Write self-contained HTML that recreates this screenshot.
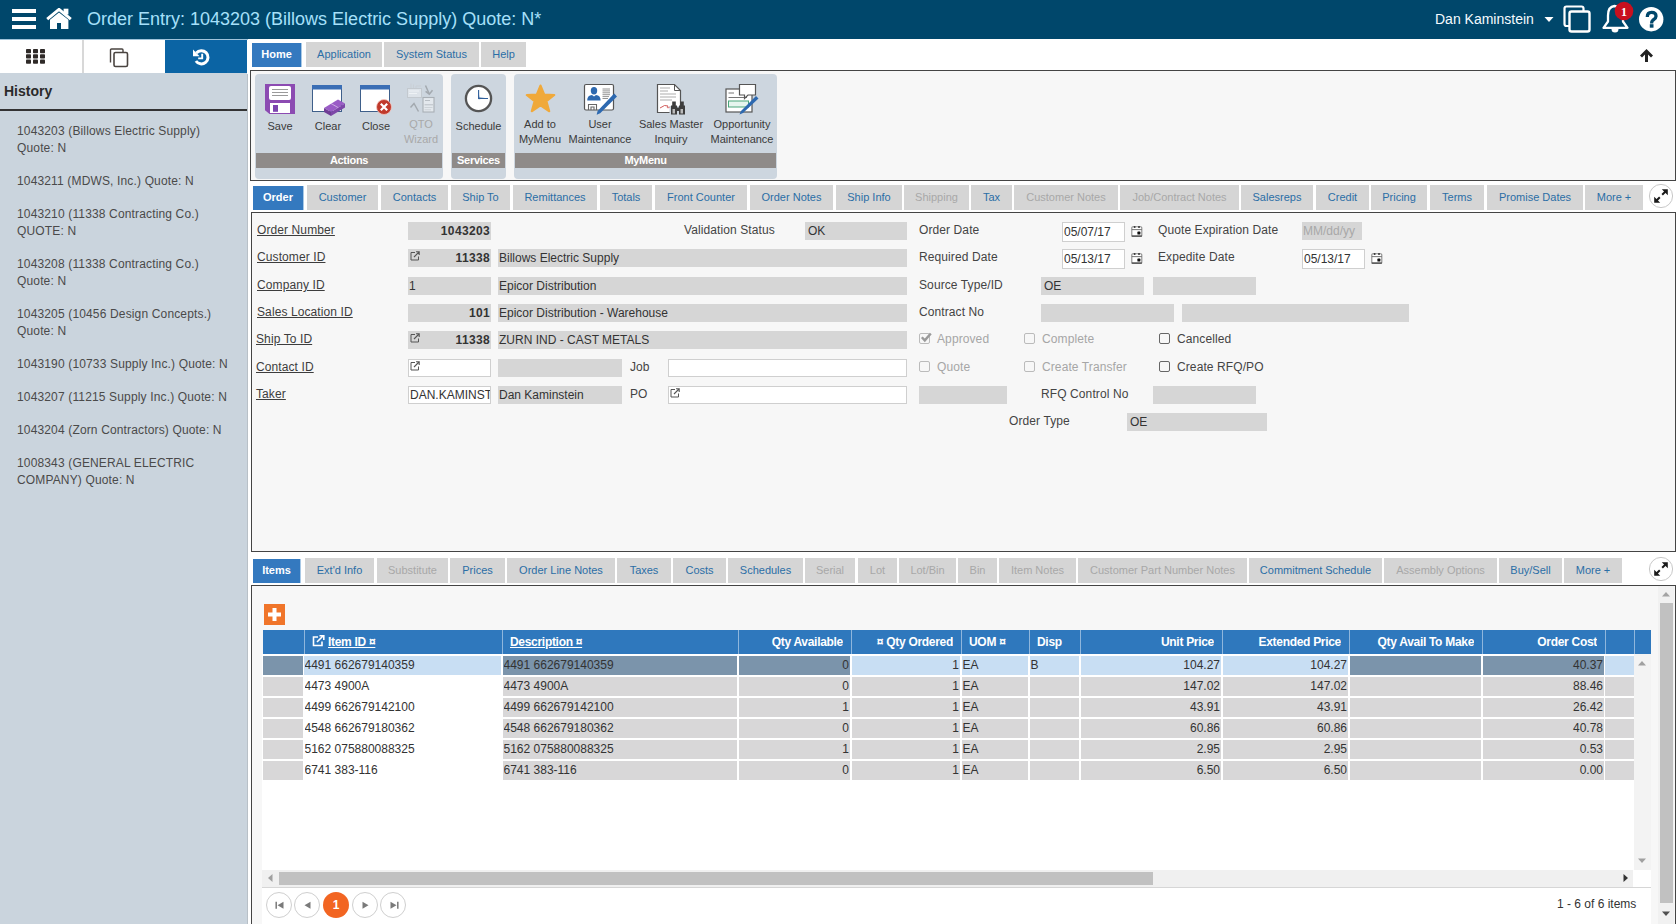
<!DOCTYPE html><html><head><meta charset="utf-8"><style>
*{box-sizing:border-box;margin:0;padding:0}
html,body{width:1676px;height:924px;overflow:hidden;background:#fff;font-family:"Liberation Sans",sans-serif;color:#333;position:relative}
.t{position:absolute;white-space:nowrap}
.tab{position:absolute;height:25px;line-height:25px;background:#d5d5d5;color:#2b6ea6;font-size:11px;text-align:center}
.tab.act{background:#3479bf;color:#fff;font-weight:bold;margin-top:1px;height:24px;line-height:23px;box-shadow:1px 0 0 #a9c9e6}
.tab.dis{color:#a8a8a8}
.lbl{position:absolute;font-size:12px;color:#444;white-space:nowrap;line-height:18px;height:18px;letter-spacing:0.1px}
.lnk{text-decoration:underline}
.fld{position:absolute;height:18px;line-height:18px;background:#d6d6d6;font-size:12px;color:#333;padding:0 1px;white-space:nowrap;overflow:hidden}
.wfld{position:absolute;height:18px;line-height:16px;background:#fff;border:1px solid #cfcfcf;font-size:12px;color:#333;padding:0 1px;white-space:nowrap;overflow:hidden}
.r{text-align:right}
.b{font-weight:bold;letter-spacing:0.35px}
.chk{position:absolute;width:11px;height:11px;border:1px solid #777;border-radius:2px;background:transparent}
.grp{position:absolute;top:74px;height:105px;background:#cdd6df;border-radius:4px}
.gl{position:absolute;left:1px;right:1px;top:79px;height:15px;line-height:15px;background:#8f8b89;color:#fff;font-weight:bold;font-size:11px;letter-spacing:-0.3px;text-align:center}
.tl{position:absolute;font-size:11px;color:#3a3a3a;text-align:center;line-height:15px;white-space:nowrap}
.hist{position:absolute;left:17px;font-size:12px;color:#4a4a4a;line-height:17px;width:230px;letter-spacing:0.15px}
.th{position:absolute;top:630px;height:24px;line-height:24px;color:#fff;font-weight:bold;font-size:12px;letter-spacing:-0.3px;white-space:nowrap;overflow:hidden}
.c{position:absolute;height:19px;line-height:19px;font-size:12px;color:#333;white-space:nowrap;overflow:hidden}
</style></head><body><div style="position:absolute;left:0px;top:0px;width:1676px;height:39px;background:#00476b"></div>
<div style="position:absolute;left:12px;top:9px;width:24px;height:4px;background:#fff"></div>
<div style="position:absolute;left:12px;top:17px;width:24px;height:4px;background:#fff"></div>
<div style="position:absolute;left:12px;top:25px;width:24px;height:4px;background:#fff"></div>
<svg style="position:absolute;left:45px;top:8px" width="28" height="22" viewBox="0 0 28 22">
<path d="M2.2 11.2 L14 1.4 L25.8 11.2" fill="none" stroke="#fff" stroke-width="3"/>
<rect x="18.6" y="0.7" width="4.8" height="5.8" fill="#fff"/>
<path d="M5 21 V11.8 L14 4.4 L23.4 11.8 V21 H16 V15 H12 V21Z" fill="#fff"/>
</svg>
<div style="position:absolute;left:87px;top:7px;white-space:nowrap;font-size:18px;color:#a6e0fa;line-height:24px">Order Entry: 1043203 (Billows Electric Supply) Quote: N*</div>
<div style="position:absolute;left:1435px;top:8px;white-space:nowrap;font-size:14px;color:#f4fbff;line-height:22px">Dan Kaminstein</div>
<svg style="position:absolute;left:1544px;top:16px" width="10" height="7"><path d="M0.5 1 L9.5 1 L5 6Z" fill="#fff"/></svg>
<svg style="position:absolute;left:1562px;top:4px" width="31" height="30" viewBox="0 0 31 30">
<path d="M7.5 22 H4.5 Q2.5 22 2.5 20 V4.5 Q2.5 2.5 4.5 2.5 H19.5 Q21.5 2.5 21.5 4.5 V7" fill="none" stroke="#fff" stroke-width="2.2"/>
<rect x="7.5" y="7.5" width="20" height="20" rx="2" fill="none" stroke="#fff" stroke-width="2.4"/>
</svg>
<svg style="position:absolute;left:1600px;top:3px;overflow:visible" width="32" height="32" viewBox="0 0 32 32">
<path d="M14.5 3 C9.5 3.5 8 8 8 12.5 V18.5 L3.5 24.8 H27.5 L23 18.5 V12.5 C23 8 20 3.5 14.5 3Z" fill="none" stroke="#fff" stroke-width="2.3" stroke-linejoin="round"/>
<path d="M11.5 26 A3.5 3.5 0 0 0 18.5 26Z" fill="#fff"/>
<circle cx="24" cy="8" r="9.3" fill="#c8101f"/>
<text x="24" y="12.5" font-family="Liberation Serif" font-size="12" font-weight="bold" fill="#fff" text-anchor="middle">1</text>
</svg>
<svg style="position:absolute;left:1638px;top:7px" width="26" height="26" viewBox="0 0 26 26">
<circle cx="13.2" cy="12.2" r="12.2" fill="#fff"/>
<path d="M9.3 9.9 C9.3 6.6 11.2 5.3 13.6 5.3 C16.3 5.3 18 6.9 18 9.2 C18 11.6 15.8 12.3 14.6 13.4 C13.8 14.1 13.6 14.9 13.6 16.4" fill="none" stroke="#00476b" stroke-width="3.3"/><rect x="11.8" y="17.2" width="3.7" height="3.5" fill="#00476b"/>
</svg>
<div style="position:absolute;left:0px;top:39px;width:248px;height:1px;background:#9fc3da"></div>
<div style="position:absolute;left:0px;top:40px;width:247px;height:884px;background:#cad4dd"></div>
<div style="position:absolute;left:247px;top:74px;width:1px;height:850px;background:#b8c0c7"></div>
<div style="position:absolute;left:0px;top:40px;width:82px;height:33px;background:#fff"></div>
<div style="position:absolute;left:82px;top:40px;width:2px;height:33px;background:#d8d8d8"></div>
<div style="position:absolute;left:84px;top:40px;width:81px;height:33px;background:#fff"></div>
<div style="position:absolute;left:165px;top:40px;width:82px;height:33px;background:#0b64a4"></div>
<svg style="position:absolute;left:26px;top:49px" width="20" height="15"><rect x="0" y="0.0" width="5" height="4.2" rx="0.8" fill="#2f2a28"/><rect x="7" y="0.0" width="5" height="4.2" rx="0.8" fill="#2f2a28"/><rect x="14" y="0.0" width="5" height="4.2" rx="0.8" fill="#2f2a28"/><rect x="0" y="5.3" width="5" height="4.2" rx="0.8" fill="#2f2a28"/><rect x="7" y="5.3" width="5" height="4.2" rx="0.8" fill="#2f2a28"/><rect x="14" y="5.3" width="5" height="4.2" rx="0.8" fill="#2f2a28"/><rect x="0" y="10.6" width="5" height="4.2" rx="0.8" fill="#2f2a28"/><rect x="7" y="10.6" width="5" height="4.2" rx="0.8" fill="#2f2a28"/><rect x="14" y="10.6" width="5" height="4.2" rx="0.8" fill="#2f2a28"/></svg>
<svg style="position:absolute;left:108px;top:47px" width="22" height="21" viewBox="0 0 22 21">
<path d="M2.5 15.5 V3 Q2.5 2 3.5 2 H14 Q15 2 15 3 V5" fill="none" stroke="#4a4440" stroke-width="1.4"/>
<rect x="6" y="5.5" width="13.5" height="14" rx="1.5" fill="#fff" stroke="#4a4440" stroke-width="1.6"/>
</svg>
<svg style="position:absolute;left:191px;top:49px" width="20" height="18" viewBox="0 0 20 18">
<path d="M5.34 4.06 A6.6 6.6 0 1 1 4.93 11.99" fill="none" stroke="#fff" stroke-width="3"/>
<path d="M2 0.5 L2 7.3 L8.6 7.3Z" fill="#fff"/>
<path d="M11.2 4.8 V9.4 H7.2" fill="none" stroke="#fff" stroke-width="1.9"/>
</svg>
<div style="position:absolute;left:4px;top:80px;white-space:nowrap;font-size:14px;font-weight:bold;color:#2a2a2a;line-height:22px">History</div>
<div style="position:absolute;left:0px;top:109px;width:247px;height:2px;background:#333"></div>
<div class="hist" style="top:122.5px">1043203 (Billows Electric Supply)<br>Quote: N</div>
<div class="hist" style="top:172.5px">1043211 (MDWS, Inc.) Quote: N</div>
<div class="hist" style="top:205.5px">1043210 (11338 Contracting Co.)<br>QUOTE: N</div>
<div class="hist" style="top:255.5px">1043208 (11338 Contracting Co.)<br>Quote: N</div>
<div class="hist" style="top:306px">1043205 (10456 Design Concepts.)<br>Quote: N</div>
<div class="hist" style="top:356px">1043190 (10733 Supply Inc.) Quote: N</div>
<div class="hist" style="top:389px">1043207 (11215 Supply Inc.) Quote: N</div>
<div class="hist" style="top:421.5px">1043204 (Zorn Contractors) Quote: N</div>
<div class="hist" style="top:454.5px">1008343 (GENERAL ELECTRIC<br>COMPANY) Quote: N</div>
<div class="tab act" style="left:252px;top:42px;width:49px">Home</div>
<div class="tab" style="left:306px;top:42px;width:76px">Application</div>
<div class="tab" style="left:384px;top:42px;width:95px">System Status</div>
<div class="tab" style="left:481px;top:42px;width:45px">Help</div>
<svg style="position:absolute;left:1638px;top:47px" width="17" height="17" viewBox="0 0 17 17">
<path d="M8.5 2 L15 8.5 L13 10.5 L10 7.5 V15 H7 V7.5 L4 10.5 L2 8.5Z" fill="#222"/>
</svg>
<div style="position:absolute;left:250px;top:70px;width:1426px;height:111px;background:#f7f7f7;border:1px solid #444"></div>
<div class="grp" style="left:255px;width:188px"><div class="gl">Actions</div></div>
<div class="grp" style="left:451px;width:55px"><div class="gl">Services</div></div>
<div class="grp" style="left:514px;width:263px"><div class="gl">MyMenu</div></div>
<div class="tl" style="left:230px;width:100px;top:119px;color:#3a3a3a">Save</div>
<div class="tl" style="left:278px;width:100px;top:119px;color:#3a3a3a">Clear</div>
<div class="tl" style="left:326px;width:100px;top:119px;color:#3a3a3a">Close</div>
<div class="tl" style="left:371px;width:100px;top:117px;color:#a9a9a9">QTO<br>Wizard</div>
<div class="tl" style="left:428.5px;width:100px;top:119px;color:#3a3a3a">Schedule</div>
<div class="tl" style="left:490px;width:100px;top:117px;color:#3a3a3a">Add to<br>MyMenu</div>
<div class="tl" style="left:550px;width:100px;top:117px;color:#3a3a3a">User<br>Maintenance</div>
<div class="tl" style="left:621px;width:100px;top:117px;color:#3a3a3a">Sales Master<br>Inquiry</div>
<div class="tl" style="left:692px;width:100px;top:117px;color:#3a3a3a">Opportunity<br>Maintenance</div>
<svg style="position:absolute;left:265px;top:84px" width="30" height="30" viewBox="0 0 30 30">
<path d="M0 0 H30 V30 H4.5 L0 26.2Z" fill="#8c4bb2"/>
<rect x="4" y="2" width="22" height="14" rx="2" fill="#fff"/>
<rect x="7" y="5" width="16" height="1" fill="#9a9a9a"/><rect x="7" y="8" width="16" height="1" fill="#9a9a9a"/><rect x="7" y="11" width="16" height="1" fill="#9a9a9a"/>
<rect x="5" y="19" width="20" height="10" fill="#fff"/>
<rect x="8" y="21" width="5" height="6.8" fill="#7d45b0"/>
</svg>
<svg style="position:absolute;left:312px;top:84px" width="34" height="32" viewBox="0 0 34 32">
<rect x="0.5" y="1.5" width="29" height="26" fill="#fff" stroke="#3e5f8a" stroke-width="1"/>
<rect x="0" y="1" width="30" height="4.5" fill="#3a6eb5"/>
<path d="M12 24 L26 15.5 L33 19.5 L19 28Z" fill="#9a5cc6"/>
<path d="M12 24 L19 28 V32 L12 28Z" fill="#6f3d96"/>
<path d="M19 28 L33 19.5 V23.5 L19 32Z" fill="#7d47a8"/>
<path d="M19 19.5 L26 23.5" stroke="#d9c2ea" stroke-width="0.8"/>
</svg>
<svg style="position:absolute;left:360px;top:84px" width="32" height="32" viewBox="0 0 32 32">
<rect x="0.5" y="1.5" width="29" height="26" fill="#fff" stroke="#3e5f8a" stroke-width="1"/>
<rect x="0" y="1" width="30" height="4.5" fill="#3a6eb5"/>
<circle cx="24" cy="23" r="7.5" fill="#c0392b" stroke="#f2c6c0" stroke-width="0.8"/>
<path d="M20.8 19.8 L27.2 26.2 M27.2 19.8 L20.8 26.2" stroke="#fff" stroke-width="2.2"/>
</svg>
<svg style="position:absolute;left:405px;top:83px" width="33" height="32" viewBox="0 0 33 32">
<rect x="2.5" y="5.5" width="14" height="9" fill="#dde3e9" stroke="#c3c9cf" stroke-width="1"/>
<path d="M4 8 H14 M4 10.5 H12" stroke="#eef2f5" stroke-width="1.2"/>
<path d="M6 5 V0.5 M8.5 5 V1.5 M11 5 V3 H16" fill="none" stroke="#c9cfd5" stroke-width="1"/>
<path d="M20.5 2.5 L24.3 11 M20.6 8.4 L24.3 11.2 L27.5 7.2" fill="none" stroke="#a3a9af" stroke-width="1.5"/>
<path d="M5.5 24.5 L9 20.5 L13.5 28.5" fill="none" stroke="#a3a9af" stroke-width="1.5"/>
<rect x="18" y="14.5" width="11" height="14.5" fill="#e3e8ed" stroke="#a9afb5" stroke-width="1.1"/>
<path d="M20 17.5 H25 M19.5 21.8 H28" stroke="#b9bfc5" stroke-width="1"/>
<path d="M19.5 24.5 H27.5 M19.5 26.8 H26" stroke="#c9cfd5" stroke-width="0.9"/>
</svg>
<svg style="position:absolute;left:464px;top:84px" width="30" height="30" viewBox="0 0 30 30">
<circle cx="14.5" cy="14.5" r="12.6" fill="#fff" stroke="#555" stroke-width="2.3"/>
<path d="M14.6 6 L15.3 13.6 L24 14.3 L14.6 15.2Z" fill="#2f5f9a"/><path d="M14.6 6 V14.5 H24" fill="none" stroke="#2f5f9a" stroke-width="1.1"/>
</svg>
<svg style="position:absolute;left:524px;top:83px" width="33" height="31" viewBox="0 0 33 31">
<path d="M16.5 2.5 L20.3 11.6 L30.3 12 L22.5 18.2 L25.3 28.3 L16.5 22.4 L7.7 28.3 L10.5 18.2 L2.7 12 L12.7 11.6Z" fill="#f0a93a" stroke="#f0a93a" stroke-width="2" stroke-linejoin="round"/>
</svg>
<svg style="position:absolute;left:583px;top:83px" width="34" height="33" viewBox="0 0 34 33">
<rect x="1.5" y="1.5" width="29" height="25.5" rx="1.5" fill="#fff" stroke="#555" stroke-width="1.2"/>
<ellipse cx="11" cy="7.8" rx="3.2" ry="3.7" fill="#2d69b0"/>
<path d="M4.2 17.5 Q4.2 12.3 9 12 L11 13.5 L13 12 Q17.6 12.3 17.6 17.5Z" fill="#2d69b0"/>
<path d="M19.5 6 H27 M19.5 7.9 H27 M19.5 9.8 H27 M19.5 11.7 H27 M19.5 13.6 H26 M19.5 15.5 H25" stroke="#777" stroke-width="0.8"/>
<path d="M5.5 27 V21.5 H13.5 V27 M8 27 V24 H11 V27" fill="none" stroke="#666" stroke-width="1.1"/>
<path d="M31.2 10.6 L34 13.4 L17.2 30.2 L13.6 31.8 L14.6 28Z" fill="#2d69b0"/>
</svg>
<svg style="position:absolute;left:656px;top:83px" width="33" height="33" viewBox="0 0 33 33">
<path d="M1.5 1.5 H18.5 L24.5 7.5 V29.5 H1.5Z" fill="#fff" stroke="#555" stroke-width="1.2"/>
<path d="M18.5 1.5 V7.5 H24.5" fill="none" stroke="#555" stroke-width="1"/>
<path d="M4 5 H14 M4 8 H12 M4 11 H20 M4 14 H20 M4 17 H16" stroke="#8a8a8a" stroke-width="0.7"/>
<path d="M4 25 Q9 21 12 23 Q10 26 14 24" fill="none" stroke="#d15a5a" stroke-width="1"/>
<rect x="13.5" y="23" width="15" height="9" fill="#cdd6df"/><path d="M15 22.5 H16.2 V18.5 H19.8 V22.5 H21 V31.5 H15Z M23 22.5 H24.2 V18.5 H27.8 V22.5 H29 V31.5 H23Z" fill="#3d3d3d"/><rect x="21" y="24.5" width="2" height="3.5" fill="#3d3d3d"/><rect x="16.5" y="26" width="2.5" height="4.5" fill="#bbb"/><rect x="24.5" y="26" width="2.5" height="4.5" fill="#bbb"/>
</svg>
<svg style="position:absolute;left:725px;top:83px" width="35" height="32" viewBox="0 0 35 32">
<rect x="1" y="6" width="26" height="23" fill="#fff" stroke="#555" stroke-width="1.2"/>
<path d="M3.5 10 H9 M3.5 14.5 H22" stroke="#777" stroke-width="1"/>
<rect x="3.5" y="18" width="20" height="6" fill="#e6f5ee" stroke="#4aa57a" stroke-width="1"/>
<path d="M14.5 1.5 H30.5 V12 H23 L19.5 15.5 V12 H14.5Z" fill="#fff" stroke="#555" stroke-width="1.2"/>
<path d="M31 13 L33.5 15.5 L18 30 L14.5 31.5 L16 28Z" fill="#2d69b0"/>
</svg>
<div class="tab act" style="left:253px;top:185px;width:50px">Order</div>
<div class="tab" style="left:307px;top:185px;width:71px">Customer</div>
<div class="tab" style="left:381px;top:185px;width:67px">Contacts</div>
<div class="tab" style="left:451px;top:185px;width:59px">Ship To</div>
<div class="tab" style="left:513px;top:185px;width:84px">Remittances</div>
<div class="tab" style="left:600px;top:185px;width:52px">Totals</div>
<div class="tab" style="left:655px;top:185px;width:92px">Front Counter</div>
<div class="tab" style="left:750px;top:185px;width:83px">Order Notes</div>
<div class="tab" style="left:836px;top:185px;width:66px">Ship Info</div>
<div class="tab dis" style="left:904px;top:185px;width:65px">Shipping</div>
<div class="tab" style="left:971px;top:185px;width:41px">Tax</div>
<div class="tab dis" style="left:1014px;top:185px;width:104px">Customer Notes</div>
<div class="tab dis" style="left:1120px;top:185px;width:119px">Job/Contract Notes</div>
<div class="tab" style="left:1241px;top:185px;width:72px">Salesreps</div>
<div class="tab" style="left:1316px;top:185px;width:53px">Credit</div>
<div class="tab" style="left:1371px;top:185px;width:56px">Pricing</div>
<div class="tab" style="left:1430px;top:185px;width:54px">Terms</div>
<div class="tab" style="left:1487px;top:185px;width:96px">Promise Dates</div>
<div class="tab" style="left:1585px;top:185px;width:58px">More +</div>
<svg style="position:absolute;left:1648px;top:183px" width="26" height="26" viewBox="0 0 26 26">
<circle cx="13" cy="13" r="11.6" fill="#fff" stroke="#c8c8c8" stroke-width="1"/>
<path d="M8.5 17.5 L11.8 14.2 M14.2 11.8 L17.5 8.5" stroke="#1a1a1a" stroke-width="2"/>
<path d="M19.8 6.2 L19.8 12.2 L13.8 6.2Z M6.2 19.8 L6.2 13.8 L12.2 19.8Z" fill="#1a1a1a"/>
</svg>
<div style="position:absolute;left:251px;top:212px;width:1425px;height:340px;background:#f7f7f7;border:1px solid #444"></div>
<div class="lbl lnk" style="left:257px;top:221px;color:#3d3d3d">Order Number</div>
<div class="lbl lnk" style="left:257px;top:248px;color:#3d3d3d">Customer ID</div>
<div class="lbl lnk" style="left:257px;top:276px;color:#3d3d3d">Company ID</div>
<div class="lbl lnk" style="left:257px;top:303px;color:#3d3d3d">Sales Location ID</div>
<div class="lbl lnk" style="left:256px;top:330px;color:#3d3d3d">Ship To ID</div>
<div class="lbl lnk" style="left:256px;top:358px;color:#3d3d3d">Contact ID</div>
<div class="lbl lnk" style="left:256px;top:385px;color:#3d3d3d">Taker</div>
<div class="fld r b" style="left:408px;top:222px;width:83px">1043203</div>
<div class="fld r b" style="left:408px;top:249px;width:83px">11338</div>
<svg style="position:absolute;left:410px;top:251px" width="10" height="10" viewBox="0 0 10 10">
<path d="M5 1.5 H1 V9 H8.5 V5.5" fill="none" stroke="#555" stroke-width="1"/>
<path d="M4 6 L9 1 M6 0.8 H9.2 V4" fill="none" stroke="#555" stroke-width="1.1"/>
</svg>
<div class="fld" style="left:498px;top:249px;width:409px">Billows Electric Supply</div>
<div class="fld" style="left:408px;top:277px;width:83px">1</div>
<div class="fld" style="left:498px;top:277px;width:409px">Epicor Distribution</div>
<div class="fld r b" style="left:408px;top:304px;width:83px">101</div>
<div class="fld" style="left:498px;top:304px;width:409px">Epicor Distribution - Warehouse</div>
<div class="fld r b" style="left:408px;top:331px;width:83px">11338</div>
<svg style="position:absolute;left:410px;top:333px" width="10" height="10" viewBox="0 0 10 10">
<path d="M5 1.5 H1 V9 H8.5 V5.5" fill="none" stroke="#555" stroke-width="1"/>
<path d="M4 6 L9 1 M6 0.8 H9.2 V4" fill="none" stroke="#555" stroke-width="1.1"/>
</svg>
<div class="fld" style="left:498px;top:331px;width:409px">ZURN IND - CAST METALS</div>
<div class="wfld" style="left:408px;top:359px;width:83px"></div>
<svg style="position:absolute;left:410px;top:361px" width="10" height="10" viewBox="0 0 10 10">
<path d="M5 1.5 H1 V9 H8.5 V5.5" fill="none" stroke="#555" stroke-width="1"/>
<path d="M4 6 L9 1 M6 0.8 H9.2 V4" fill="none" stroke="#555" stroke-width="1.1"/>
</svg>
<div class="fld" style="left:498px;top:359px;width:124px"></div>
<div class="lbl" style="left:630px;top:358px">Job</div>
<div class="wfld" style="left:668px;top:359px;width:239px"></div>
<div class="wfld" style="left:408px;top:386px;width:83px">DAN.KAMINST</div>
<div class="fld" style="left:498px;top:386px;width:124px">Dan Kaminstein</div>
<div class="lbl" style="left:630px;top:385px">PO</div>
<div class="wfld" style="left:668px;top:386px;width:239px"></div>
<svg style="position:absolute;left:670px;top:388px" width="10" height="10" viewBox="0 0 10 10">
<path d="M5 1.5 H1 V9 H8.5 V5.5" fill="none" stroke="#555" stroke-width="1"/>
<path d="M4 6 L9 1 M6 0.8 H9.2 V4" fill="none" stroke="#555" stroke-width="1.1"/>
</svg>
<div class="lbl" style="left:684px;top:221px">Validation Status</div>
<div class="fld" style="left:805px;top:222px;width:102px"><span style="margin-left:2px">OK</span></div>
<div class="lbl" style="left:919px;top:221px">Order Date</div>
<div class="lbl" style="left:919px;top:248px">Required Date</div>
<div class="lbl" style="left:919px;top:276px">Source Type/ID</div>
<div class="lbl" style="left:919px;top:303px">Contract No</div>
<div class="wfld" style="left:1062px;top:222px;width:63px;height:20px;line-height:18px">05/07/17</div>
<svg style="position:absolute;left:1131px;top:225px" width="12" height="12" viewBox="0 0 12 12">
<rect x="0.8" y="1.8" width="10" height="9.6" rx="1" fill="#fff" stroke="#8a8a8a" stroke-width="1.1"/>
<rect x="0.8" y="4.2" width="10" height="0.9" fill="#666"/>
<rect x="0.8" y="10.4" width="10" height="1.2" fill="#444"/>
<circle cx="3.6" cy="1.9" r="1" fill="#333"/><circle cx="8" cy="1.9" r="1" fill="#333"/>
<rect x="6.4" y="6.6" width="3" height="3" rx="0.6" fill="#111"/>
</svg>
<div class="wfld" style="left:1062px;top:249px;width:63px;height:20px;line-height:18px">05/13/17</div>
<svg style="position:absolute;left:1131px;top:252px" width="12" height="12" viewBox="0 0 12 12">
<rect x="0.8" y="1.8" width="10" height="9.6" rx="1" fill="#fff" stroke="#8a8a8a" stroke-width="1.1"/>
<rect x="0.8" y="4.2" width="10" height="0.9" fill="#666"/>
<rect x="0.8" y="10.4" width="10" height="1.2" fill="#444"/>
<circle cx="3.6" cy="1.9" r="1" fill="#333"/><circle cx="8" cy="1.9" r="1" fill="#333"/>
<rect x="6.4" y="6.6" width="3" height="3" rx="0.6" fill="#111"/>
</svg>
<div class="lbl" style="left:1158px;top:221px">Quote Expiration Date</div>
<div class="lbl" style="left:1158px;top:248px">Expedite Date</div>
<div class="fld" style="left:1302px;top:222px;width:60px"><span style="color:#a8a8a8">MM/dd/yy</span></div>
<div class="wfld" style="left:1302px;top:249px;width:63px;height:20px;line-height:18px">05/13/17</div>
<svg style="position:absolute;left:1371px;top:252px" width="12" height="12" viewBox="0 0 12 12">
<rect x="0.8" y="1.8" width="10" height="9.6" rx="1" fill="#fff" stroke="#8a8a8a" stroke-width="1.1"/>
<rect x="0.8" y="4.2" width="10" height="0.9" fill="#666"/>
<rect x="0.8" y="10.4" width="10" height="1.2" fill="#444"/>
<circle cx="3.6" cy="1.9" r="1" fill="#333"/><circle cx="8" cy="1.9" r="1" fill="#333"/>
<rect x="6.4" y="6.6" width="3" height="3" rx="0.6" fill="#111"/>
</svg>
<div class="fld" style="left:1041px;top:277px;width:103px"><span style="margin-left:2px">OE</span></div>
<div class="fld" style="left:1153px;top:277px;width:103px"></div>
<div class="fld" style="left:1041px;top:304px;width:133px"></div>
<div class="fld" style="left:1182px;top:304px;width:227px"></div>
<div class="chk" style="left:919px;top:333px;border-color:#bbb"><svg style="position:absolute;left:0;top:-2px" width="12" height="12"><path d="M1.8 5.2 L4.8 8.4 L10.8 1.5" fill="none" stroke="#9a9a9a" stroke-width="2.4"/></svg></div>
<div class="lbl" style="left:937px;top:329.5px;color:#a6a6a6">Approved</div>
<div class="chk" style="left:1024px;top:333px;border-color:#bbb"></div>
<div class="lbl" style="left:1042px;top:329.5px;color:#a6a6a6">Complete</div>
<div class="chk" style="left:1159px;top:333px;border-color:#666"></div>
<div class="lbl" style="left:1177px;top:329.5px;color:#444">Cancelled</div>
<div class="chk" style="left:919px;top:361px;border-color:#bbb"></div>
<div class="lbl" style="left:937px;top:357.5px;color:#a6a6a6">Quote</div>
<div class="chk" style="left:1024px;top:361px;border-color:#bbb"></div>
<div class="lbl" style="left:1042px;top:357.5px;color:#a6a6a6">Create Transfer</div>
<div class="chk" style="left:1159px;top:361px;border-color:#666"></div>
<div class="lbl" style="left:1177px;top:357.5px;color:#444">Create RFQ/PO</div>
<div class="fld" style="left:919px;top:386px;width:88px"></div>
<div class="lbl" style="left:1041px;top:385px">RFQ Control No</div>
<div class="fld" style="left:1153px;top:386px;width:103px"></div>
<div class="lbl" style="left:1009px;top:412px">Order Type</div>
<div class="fld" style="left:1127px;top:413px;width:140px"><span style="margin-left:2px">OE</span></div>
<div class="tab act" style="left:253px;top:558px;width:47px">Items</div>
<div class="tab" style="left:305px;top:558px;width:69px">Ext'd Info</div>
<div class="tab dis" style="left:377px;top:558px;width:71px">Substitute</div>
<div class="tab" style="left:450px;top:558px;width:55px">Prices</div>
<div class="tab" style="left:507px;top:558px;width:108px">Order Line Notes</div>
<div class="tab" style="left:617px;top:558px;width:54px">Taxes</div>
<div class="tab" style="left:673px;top:558px;width:53px">Costs</div>
<div class="tab" style="left:728px;top:558px;width:75px">Schedules</div>
<div class="tab dis" style="left:805px;top:558px;width:50px">Serial</div>
<div class="tab dis" style="left:858px;top:558px;width:39px">Lot</div>
<div class="tab dis" style="left:899px;top:558px;width:57px">Lot/Bin</div>
<div class="tab dis" style="left:958px;top:558px;width:39px">Bin</div>
<div class="tab dis" style="left:999px;top:558px;width:77px">Item Notes</div>
<div class="tab dis" style="left:1078px;top:558px;width:169px">Customer Part Number Notes</div>
<div class="tab" style="left:1249px;top:558px;width:133px">Commitment Schedule</div>
<div class="tab dis" style="left:1384px;top:558px;width:113px">Assembly Options</div>
<div class="tab" style="left:1499px;top:558px;width:63px">Buy/Sell</div>
<div class="tab" style="left:1564px;top:558px;width:58px">More +</div>
<svg style="position:absolute;left:1648px;top:556px" width="26" height="26" viewBox="0 0 26 26">
<circle cx="13" cy="13" r="11.6" fill="#fff" stroke="#c8c8c8" stroke-width="1"/>
<path d="M8.5 17.5 L11.8 14.2 M14.2 11.8 L17.5 8.5" stroke="#1a1a1a" stroke-width="2"/>
<path d="M19.8 6.2 L19.8 12.2 L13.8 6.2Z M6.2 19.8 L6.2 13.8 L12.2 19.8Z" fill="#1a1a1a"/>
</svg>
<div style="position:absolute;left:251px;top:585px;width:1425px;height:345px;background:#f7f7f7;border:1px solid #444;border-bottom:none"></div>
<div style="position:absolute;left:264px;top:604px;width:21px;height:21px;background:#f0752a"></div>
<svg style="position:absolute;left:264px;top:604px" width="21" height="21"><path d="M8.5 4 H12.5 V8.5 H17 V12.5 H12.5 V17 H8.5 V12.5 H4 V8.5 H8.5Z" fill="#fff"/></svg>
<div style="position:absolute;left:262px;top:654px;width:1389px;height:216px;background:#fff"></div>
<div style="position:absolute;left:263px;top:630px;width:1388px;height:24px;background:#2f78bd"></div>
<div style="position:absolute;left:304px;top:630px;width:1px;height:24px;background:#8fb6dc"></div>
<div style="position:absolute;left:502px;top:630px;width:1px;height:24px;background:#8fb6dc"></div>
<div style="position:absolute;left:738px;top:630px;width:1px;height:24px;background:#8fb6dc"></div>
<div style="position:absolute;left:851px;top:630px;width:1px;height:24px;background:#8fb6dc"></div>
<div style="position:absolute;left:961px;top:630px;width:1px;height:24px;background:#8fb6dc"></div>
<div style="position:absolute;left:1029px;top:630px;width:1px;height:24px;background:#8fb6dc"></div>
<div style="position:absolute;left:1080px;top:630px;width:1px;height:24px;background:#8fb6dc"></div>
<div style="position:absolute;left:1222px;top:630px;width:1px;height:24px;background:#8fb6dc"></div>
<div style="position:absolute;left:1349px;top:630px;width:1px;height:24px;background:#8fb6dc"></div>
<div style="position:absolute;left:1482px;top:630px;width:1px;height:24px;background:#8fb6dc"></div>
<div style="position:absolute;left:1605px;top:630px;width:1px;height:24px;background:#8fb6dc"></div>
<div style="position:absolute;left:1634px;top:630px;width:1px;height:24px;background:#8fb6dc"></div>
<div class="th" style="left:312px;width:188px"><svg width="13" height="12" viewBox="0 0 13 12" style="vertical-align:-1px"><path d="M6 2 H1.5 V10.5 H10 V6.5" fill="none" stroke="#fff" stroke-width="1.6"/><path d="M5 7 L11 1 M7.5 0.8 H11.8 V5" fill="none" stroke="#fff" stroke-width="1.6"/></svg><span style="text-decoration:underline;margin-left:3px">Item ID ¤</span></div>
<div class="th" style="left:510px;width:226px"><span style="text-decoration:underline">Description ¤</span></div>
<div class="th" style="left:740px;width:103px;text-align:right">Qty Available</div>
<div class="th" style="left:853px;width:100px;text-align:right">¤ Qty Ordered</div>
<div class="th" style="left:969px;width:58px">UOM ¤</div>
<div class="th" style="left:1037px;width:41px">Disp</div>
<div class="th" style="left:1082px;width:132px;text-align:right">Unit Price</div>
<div class="th" style="left:1224px;width:117px;text-align:right">Extended Price</div>
<div class="th" style="left:1351px;width:123px;text-align:right">Qty Avail To Make</div>
<div class="th" style="left:1484px;width:113px;text-align:right">Order Cost</div>
<div style="position:absolute;left:263px;top:656px;width:40px;height:19px;background:#7b94ab"></div>
<div style="position:absolute;left:304px;top:656px;width:197px;height:19px;background:#c8def3"></div>
<div style="position:absolute;left:503px;top:656px;width:234px;height:19px;background:#7b94ab"></div>
<div style="position:absolute;left:739px;top:656px;width:111px;height:19px;background:#7b94ab"></div>
<div style="position:absolute;left:852px;top:656px;width:108px;height:19px;background:#c8def3"></div>
<div style="position:absolute;left:962px;top:656px;width:66px;height:19px;background:#c8def3"></div>
<div style="position:absolute;left:1030px;top:656px;width:49px;height:19px;background:#c8def3"></div>
<div style="position:absolute;left:1081px;top:656px;width:140px;height:19px;background:#c8def3"></div>
<div style="position:absolute;left:1223px;top:656px;width:125px;height:19px;background:#c8def3"></div>
<div style="position:absolute;left:1350px;top:656px;width:131px;height:19px;background:#7b94ab"></div>
<div style="position:absolute;left:1483px;top:656px;width:121px;height:19px;background:#7b94ab"></div>
<div style="position:absolute;left:1605px;top:656px;width:29px;height:19px;background:#c8def3"></div>
<div class="c" style="left:304.5px;top:656px;width:197px">4491 662679140359</div>
<div class="c" style="left:503.5px;top:656px;width:234px">4491 662679140359</div>
<div class="c" style="left:739px;top:656px;width:110px;text-align:right">0</div>
<div class="c" style="left:852px;top:656px;width:107px;text-align:right">1</div>
<div class="c" style="left:962.5px;top:656px;width:66px">EA</div>
<div class="c" style="left:1030.5px;top:656px;width:49px">B</div>
<div class="c" style="left:1081px;top:656px;width:139px;text-align:right">104.27</div>
<div class="c" style="left:1223px;top:656px;width:124px;text-align:right">104.27</div>
<div class="c" style="left:1483px;top:656px;width:120px;text-align:right">40.37</div>
<div style="position:absolute;left:263px;top:677px;width:40px;height:19px;background:#d8d7d8"></div>
<div style="position:absolute;left:304px;top:677px;width:197px;height:19px;background:#fff"></div>
<div style="position:absolute;left:503px;top:677px;width:234px;height:19px;background:#d8d7d8"></div>
<div style="position:absolute;left:739px;top:677px;width:111px;height:19px;background:#d8d7d8"></div>
<div style="position:absolute;left:852px;top:677px;width:108px;height:19px;background:#d8d7d8"></div>
<div style="position:absolute;left:962px;top:677px;width:66px;height:19px;background:#d8d7d8"></div>
<div style="position:absolute;left:1030px;top:677px;width:49px;height:19px;background:#d8d7d8"></div>
<div style="position:absolute;left:1081px;top:677px;width:140px;height:19px;background:#d8d7d8"></div>
<div style="position:absolute;left:1223px;top:677px;width:125px;height:19px;background:#d8d7d8"></div>
<div style="position:absolute;left:1350px;top:677px;width:131px;height:19px;background:#d8d7d8"></div>
<div style="position:absolute;left:1483px;top:677px;width:121px;height:19px;background:#d8d7d8"></div>
<div style="position:absolute;left:1605px;top:677px;width:29px;height:19px;background:#d8d7d8"></div>
<div class="c" style="left:304.5px;top:677px;width:197px">4473 4900A</div>
<div class="c" style="left:503.5px;top:677px;width:234px">4473 4900A</div>
<div class="c" style="left:739px;top:677px;width:110px;text-align:right">0</div>
<div class="c" style="left:852px;top:677px;width:107px;text-align:right">1</div>
<div class="c" style="left:962.5px;top:677px;width:66px">EA</div>
<div class="c" style="left:1081px;top:677px;width:139px;text-align:right">147.02</div>
<div class="c" style="left:1223px;top:677px;width:124px;text-align:right">147.02</div>
<div class="c" style="left:1483px;top:677px;width:120px;text-align:right">88.46</div>
<div style="position:absolute;left:263px;top:698px;width:40px;height:19px;background:#d8d7d8"></div>
<div style="position:absolute;left:304px;top:698px;width:197px;height:19px;background:#fff"></div>
<div style="position:absolute;left:503px;top:698px;width:234px;height:19px;background:#d8d7d8"></div>
<div style="position:absolute;left:739px;top:698px;width:111px;height:19px;background:#d8d7d8"></div>
<div style="position:absolute;left:852px;top:698px;width:108px;height:19px;background:#d8d7d8"></div>
<div style="position:absolute;left:962px;top:698px;width:66px;height:19px;background:#d8d7d8"></div>
<div style="position:absolute;left:1030px;top:698px;width:49px;height:19px;background:#d8d7d8"></div>
<div style="position:absolute;left:1081px;top:698px;width:140px;height:19px;background:#d8d7d8"></div>
<div style="position:absolute;left:1223px;top:698px;width:125px;height:19px;background:#d8d7d8"></div>
<div style="position:absolute;left:1350px;top:698px;width:131px;height:19px;background:#d8d7d8"></div>
<div style="position:absolute;left:1483px;top:698px;width:121px;height:19px;background:#d8d7d8"></div>
<div style="position:absolute;left:1605px;top:698px;width:29px;height:19px;background:#d8d7d8"></div>
<div class="c" style="left:304.5px;top:698px;width:197px">4499 662679142100</div>
<div class="c" style="left:503.5px;top:698px;width:234px">4499 662679142100</div>
<div class="c" style="left:739px;top:698px;width:110px;text-align:right">1</div>
<div class="c" style="left:852px;top:698px;width:107px;text-align:right">1</div>
<div class="c" style="left:962.5px;top:698px;width:66px">EA</div>
<div class="c" style="left:1081px;top:698px;width:139px;text-align:right">43.91</div>
<div class="c" style="left:1223px;top:698px;width:124px;text-align:right">43.91</div>
<div class="c" style="left:1483px;top:698px;width:120px;text-align:right">26.42</div>
<div style="position:absolute;left:263px;top:719px;width:40px;height:19px;background:#d8d7d8"></div>
<div style="position:absolute;left:304px;top:719px;width:197px;height:19px;background:#fff"></div>
<div style="position:absolute;left:503px;top:719px;width:234px;height:19px;background:#d8d7d8"></div>
<div style="position:absolute;left:739px;top:719px;width:111px;height:19px;background:#d8d7d8"></div>
<div style="position:absolute;left:852px;top:719px;width:108px;height:19px;background:#d8d7d8"></div>
<div style="position:absolute;left:962px;top:719px;width:66px;height:19px;background:#d8d7d8"></div>
<div style="position:absolute;left:1030px;top:719px;width:49px;height:19px;background:#d8d7d8"></div>
<div style="position:absolute;left:1081px;top:719px;width:140px;height:19px;background:#d8d7d8"></div>
<div style="position:absolute;left:1223px;top:719px;width:125px;height:19px;background:#d8d7d8"></div>
<div style="position:absolute;left:1350px;top:719px;width:131px;height:19px;background:#d8d7d8"></div>
<div style="position:absolute;left:1483px;top:719px;width:121px;height:19px;background:#d8d7d8"></div>
<div style="position:absolute;left:1605px;top:719px;width:29px;height:19px;background:#d8d7d8"></div>
<div class="c" style="left:304.5px;top:719px;width:197px">4548 662679180362</div>
<div class="c" style="left:503.5px;top:719px;width:234px">4548 662679180362</div>
<div class="c" style="left:739px;top:719px;width:110px;text-align:right">0</div>
<div class="c" style="left:852px;top:719px;width:107px;text-align:right">1</div>
<div class="c" style="left:962.5px;top:719px;width:66px">EA</div>
<div class="c" style="left:1081px;top:719px;width:139px;text-align:right">60.86</div>
<div class="c" style="left:1223px;top:719px;width:124px;text-align:right">60.86</div>
<div class="c" style="left:1483px;top:719px;width:120px;text-align:right">40.78</div>
<div style="position:absolute;left:263px;top:740px;width:40px;height:19px;background:#d8d7d8"></div>
<div style="position:absolute;left:304px;top:740px;width:197px;height:19px;background:#fff"></div>
<div style="position:absolute;left:503px;top:740px;width:234px;height:19px;background:#d8d7d8"></div>
<div style="position:absolute;left:739px;top:740px;width:111px;height:19px;background:#d8d7d8"></div>
<div style="position:absolute;left:852px;top:740px;width:108px;height:19px;background:#d8d7d8"></div>
<div style="position:absolute;left:962px;top:740px;width:66px;height:19px;background:#d8d7d8"></div>
<div style="position:absolute;left:1030px;top:740px;width:49px;height:19px;background:#d8d7d8"></div>
<div style="position:absolute;left:1081px;top:740px;width:140px;height:19px;background:#d8d7d8"></div>
<div style="position:absolute;left:1223px;top:740px;width:125px;height:19px;background:#d8d7d8"></div>
<div style="position:absolute;left:1350px;top:740px;width:131px;height:19px;background:#d8d7d8"></div>
<div style="position:absolute;left:1483px;top:740px;width:121px;height:19px;background:#d8d7d8"></div>
<div style="position:absolute;left:1605px;top:740px;width:29px;height:19px;background:#d8d7d8"></div>
<div class="c" style="left:304.5px;top:740px;width:197px">5162 075880088325</div>
<div class="c" style="left:503.5px;top:740px;width:234px">5162 075880088325</div>
<div class="c" style="left:739px;top:740px;width:110px;text-align:right">1</div>
<div class="c" style="left:852px;top:740px;width:107px;text-align:right">1</div>
<div class="c" style="left:962.5px;top:740px;width:66px">EA</div>
<div class="c" style="left:1081px;top:740px;width:139px;text-align:right">2.95</div>
<div class="c" style="left:1223px;top:740px;width:124px;text-align:right">2.95</div>
<div class="c" style="left:1483px;top:740px;width:120px;text-align:right">0.53</div>
<div style="position:absolute;left:263px;top:761px;width:40px;height:19px;background:#d8d7d8"></div>
<div style="position:absolute;left:304px;top:761px;width:197px;height:19px;background:#fff"></div>
<div style="position:absolute;left:503px;top:761px;width:234px;height:19px;background:#d8d7d8"></div>
<div style="position:absolute;left:739px;top:761px;width:111px;height:19px;background:#d8d7d8"></div>
<div style="position:absolute;left:852px;top:761px;width:108px;height:19px;background:#d8d7d8"></div>
<div style="position:absolute;left:962px;top:761px;width:66px;height:19px;background:#d8d7d8"></div>
<div style="position:absolute;left:1030px;top:761px;width:49px;height:19px;background:#d8d7d8"></div>
<div style="position:absolute;left:1081px;top:761px;width:140px;height:19px;background:#d8d7d8"></div>
<div style="position:absolute;left:1223px;top:761px;width:125px;height:19px;background:#d8d7d8"></div>
<div style="position:absolute;left:1350px;top:761px;width:131px;height:19px;background:#d8d7d8"></div>
<div style="position:absolute;left:1483px;top:761px;width:121px;height:19px;background:#d8d7d8"></div>
<div style="position:absolute;left:1605px;top:761px;width:29px;height:19px;background:#d8d7d8"></div>
<div class="c" style="left:304.5px;top:761px;width:197px">6741 383-116</div>
<div class="c" style="left:503.5px;top:761px;width:234px">6741 383-116</div>
<div class="c" style="left:739px;top:761px;width:110px;text-align:right">0</div>
<div class="c" style="left:852px;top:761px;width:107px;text-align:right">1</div>
<div class="c" style="left:962.5px;top:761px;width:66px">EA</div>
<div class="c" style="left:1081px;top:761px;width:139px;text-align:right">6.50</div>
<div class="c" style="left:1223px;top:761px;width:124px;text-align:right">6.50</div>
<div class="c" style="left:1483px;top:761px;width:120px;text-align:right">0.00</div>
<div style="position:absolute;left:1634px;top:654px;width:17px;height:216px;background:#f3f3f3"></div>
<svg style="position:absolute;left:1637px;top:659px" width="10" height="8"><path d="M1 6.5 L5 2 L9 6.5Z" fill="#a0a0a0"/></svg>
<svg style="position:absolute;left:1637px;top:857px" width="10" height="8"><path d="M1 1.5 L5 6 L9 1.5Z" fill="#a0a0a0"/></svg>
<div style="position:absolute;left:262px;top:870px;width:1371px;height:17px;background:#f0f0f0"></div>
<div style="position:absolute;left:279px;top:872px;width:874px;height:13px;background:#c1c1c1"></div>
<svg style="position:absolute;left:266px;top:873px" width="8" height="10"><path d="M6.5 1 L2 5 L6.5 9Z" fill="#a0a0a0"/></svg>
<svg style="position:absolute;left:1622px;top:873px" width="8" height="10"><path d="M1.5 1 L6 5 L1.5 9Z" fill="#333"/></svg>
<div style="position:absolute;left:1633px;top:870px;width:18px;height:17px;background:#fff"></div>
<div style="position:absolute;left:262px;top:887px;width:1389px;height:1px;background:#d6d6d6"></div>
<div style="position:absolute;left:262px;top:888px;width:1389px;height:36px;background:#fff"></div>
<div style="position:absolute;left:266px;top:892px;width:26px;height:26px;border-radius:13px;border:1px solid #cfcfcf;background:#fff"></div>
<div style="position:absolute;left:294px;top:892px;width:26px;height:26px;border-radius:13px;border:1px solid #cfcfcf;background:#fff"></div>
<div style="position:absolute;left:323px;top:892px;width:26px;height:26px;border-radius:13px;background:#f26522;color:#fff;font-size:12px;font-weight:bold;text-align:center;line-height:26px">1</div>
<div style="position:absolute;left:352px;top:892px;width:26px;height:26px;border-radius:13px;border:1px solid #cfcfcf;background:#fff"></div>
<div style="position:absolute;left:380px;top:892px;width:26px;height:26px;border-radius:13px;border:1px solid #cfcfcf;background:#fff"></div>
<svg style="position:absolute;left:266px;top:892px" width="140" height="26">
<path d="M10.2 9.8 V16.8" stroke="#7a7a7a" stroke-width="1.5"/><path d="M17.5 9.8 L11.5 13.3 L17.5 16.8Z" fill="#7a7a7a"/>
<path d="M44.5 9.8 L38.5 13.3 L44.5 16.8Z" fill="#7a7a7a"/>
<path d="M96.5 9.8 L102.5 13.3 L96.5 16.8Z" fill="#7a7a7a"/>
<path d="M124.5 9.8 L130.5 13.3 L124.5 16.8Z" fill="#7a7a7a"/><path d="M131.8 9.8 V16.8" stroke="#7a7a7a" stroke-width="1.5"/>
</svg>
<div style="position:absolute;left:1557px;top:895px;white-space:nowrap;font-size:12px;color:#333;line-height:18px">1 - 6 of 6 items</div>
<div style="position:absolute;left:1658px;top:586px;width:16px;height:338px;background:#f1f1f1"></div>
<div style="position:absolute;left:1660px;top:603px;width:13px;height:300px;background:#c1c1c1"></div>
<svg style="position:absolute;left:1661px;top:590px" width="10" height="8"><path d="M1 6.5 L5 2 L9 6.5Z" fill="#a3a3a3"/></svg>
<svg style="position:absolute;left:1661px;top:910px" width="10" height="8"><path d="M1 1.5 L5 6 L9 1.5Z" fill="#505050"/></svg></body></html>
